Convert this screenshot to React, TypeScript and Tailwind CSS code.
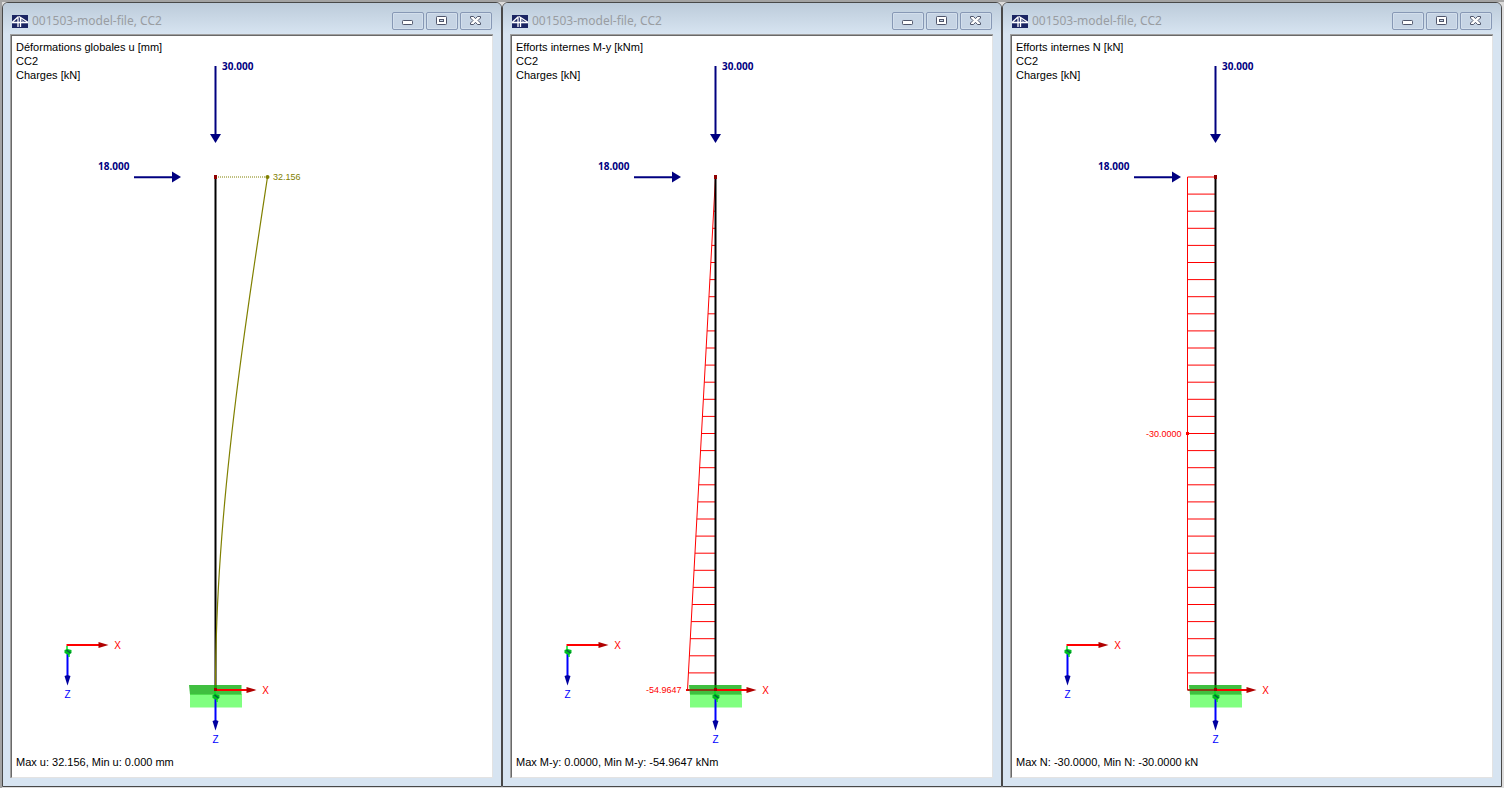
import React from 'react';

interface ResultView {
  title: string;
  result: string;
  summary: string;
  kind: 'deformation' | 'moment' | 'normal';
}

const views: ResultView[] = [
  { title: '001503-model-file, CC2', result: 'Déformations globales u [mm]', summary: 'Max u: 32.156, Min u: 0.000 mm', kind: 'deformation' },
  { title: '001503-model-file, CC2', result: 'Efforts internes M-y [kNm]', summary: 'Max M-y: 0.0000, Min M-y: -54.9647 kNm', kind: 'moment' },
  { title: '001503-model-file, CC2', result: 'Efforts internes N [kN]', summary: 'Max N: -30.0000, Min N: -30.0000 kN', kind: 'normal' },
];

// Column geometry in drawing units
const TOP = 177;
const BASE = 690;
const AXIS = 215.5;
const DIVISIONS = 30;
const steps = Array.from({ length: DIVISIONS + 1 }, (_, i) => i);
const stepY = (i: number) => TOP + ((BASE - TOP) * i) / DIVISIONS;

// Bending line of a cantilever loaded at its free end
const bendingLine = steps
  .map(i => {
    const s = 1 - i / DIVISIONS;
    return `${AXIS + (52 * (3 * s * s - s * s * s)) / 2},${stepY(i)}`;
  })
  .join(' ');

const AppIcon: React.FC = () => (
  <svg viewBox="0 0 16 13" className="h-[13px] w-4 flex-shrink-0" aria-hidden="true">
    <rect width="16" height="13" fill="#1b2563" />
    <path d="M0 7.5h16" stroke="#fff" strokeWidth="1.6" />
    <path d="M0.5 7L6.5 1.5M6 1.5V12M8.5 2v10M7 1.5l8.500 5.500" stroke="#fff" strokeWidth="1.3" fill="none" />
    <path d="M8.500 4l3 3" stroke="#fff" strokeWidth="0.8" />
  </svg>
);

const MinimizeIcon = () => (
  <svg viewBox="0 0 12 10" className="h-[10px] w-3" aria-hidden="true">
    <rect x="0.5" y="4.5" width="10" height="4" rx="0.8" fill="#fff" stroke="#50566b" />
  </svg>
);

const MaximizeIcon = () => (
  <svg viewBox="0 0 12 10" className="h-[10px] w-3" aria-hidden="true">
    <rect x="0.5" y="0.5" width="10" height="8" rx="0.8" fill="#fff" stroke="#50566b" />
    <rect x="3.5" y="3.5" width="4" height="2" fill="#c7d5e6" stroke="#50566b" />
  </svg>
);

const CloseIcon = () => (
  <svg viewBox="0 0 12 10" className="h-[10px] w-3" aria-hidden="true">
    <path d="M0.5 0.5h3l2 2.2 2-2.2h3V2L8 4.5 10.5 7v1.5h-3l-2-2.2-2 2.2h-3V7L3 4.5 0.5 2z" fill="#fff" stroke="#50566b" />
  </svg>
);

const WindowButton: React.FC<{ label: string; children: React.ReactNode }> = ({ label, children }) => (
  <button
    aria-label={label}
    className="flex h-[18px] w-8 items-center justify-center rounded-[2px] border border-[#8798b5] bg-[#c6d4e4] shadow-[inset_0_0_0_1px_#d3dfec]"
  >
    {children}
  </button>
);

// X / Z axes, with the Y axis pointing away from the viewer
const Axes: React.FC<{ x: number; y: number }> = ({ x, y }) => (
  <g>
    <path d={`M${x} ${y + 5}v28`} stroke="#0000ff" strokeWidth="2" />
    <path d={`M${x - 3} ${y + 31}l3-1 3 1-3 9.5z`} fill="#0000a0" />
    <path d={`M${x - 1} ${y}h34`} stroke="#ff0000" strokeWidth="2" />
    <path d={`M${x + 31} ${y - 3}l10 3-10 3z`} fill="#b00000" />
    <path d={`M${x - 0.5} ${y + 1}v7M${x + 1.5} ${y + 5}v7`} stroke="#00e020" strokeWidth="1.5" />
    <path d={`M${x - 3} ${y + 5}l3-1 4 1v3l-3 2-4-2z`} fill="#00c020" />
    <path d={`M${x - 1} ${y + 5}l4 3`} stroke="#006040" strokeWidth="1.5" />
    <text x={x + 50} y={y + 4} textAnchor="middle" fontSize="10" fill="#ff0000">X</text>
    <text x={x} y={y + 53} textAnchor="middle" fontSize="10" fill="#0000ff">Z</text>
  </g>
);

const Loads: React.FC = () => (
  <g fill="#000080" fontWeight="bold" fontSize="10" fontFamily="'Noto Sans', sans-serif">
    <path d="M215.5 66v70" stroke="#000080" strokeWidth="2" />
    <path d="M210 134h11l-5.5 9z" />
    <text x="222" y="70">30.000</text>
    <path d="M134 177.3h40" stroke="#000080" strokeWidth="2" />
    <path d="M172 171.5v11l9-5.5z" />
    <text x="98" y="170">18.000</text>
  </g>
);

const Deformation: React.FC = () => (
  <g>
    <polyline points={bendingLine} fill="none" stroke="#808000" strokeWidth="1.2" />
    <path d="M218 177h49" stroke="#808000" strokeDasharray="1 1" />
    <circle cx="267.5" cy="177" r="2" fill="#808000" />
    <text x="273" y="180" fontSize="9" fill="#808000">32.156</text>
  </g>
);

const Moment: React.FC = () => (
  <g stroke="#ff0000">
    {steps.map(i => (
      <path key={i} d={`M${AXIS - (28 * i) / DIVISIONS} ${stepY(i)}H${AXIS}`} />
    ))}
    <path d={`M${AXIS} ${TOP}L${AXIS - 28} ${BASE}`} />
    <rect x="186" y="689" width="3" height="2" fill="#ff0000" stroke="none" />
    <text x="146" y="693" fontSize="9" fill="#ff0000" stroke="none">-54.9647</text>
  </g>
);

const NormalForce: React.FC = () => (
  <g stroke="#ff0000">
    {steps.map(i => (
      <path key={i} d={`M${AXIS - 28} ${stepY(i)}H${AXIS}`} />
    ))}
    <path d={`M${AXIS - 28} ${TOP}V${BASE}`} />
    <rect x="186" y="432" width="3" height="3" fill="#ff0000" stroke="none" />
    <text x="146" y="437" fontSize="9" fill="#ff0000" stroke="none">-30.0000</text>
  </g>
);

const ModelDrawing: React.FC<{ kind: ResultView['kind'] }> = ({ kind }) => (
  <svg
    viewBox="12 36 480 741"
    fontFamily="'Liberation Sans', Arial, sans-serif"
    className="col-start-1 row-start-1 h-full min-h-0 w-full"
    role="img"
    aria-label="Column model"
  >
    {kind === 'moment' && <Moment />}
    {kind === 'normal' && <NormalForce />}
    <path d={`M${AXIS} ${TOP}V${BASE}`} stroke="#000" strokeWidth="2" />
    {kind === 'deformation' && <Deformation />}
    <rect x="214" y="175" width="3" height="4" fill="#900000" />
    <Loads />

    {/* Support */}
    <path d="M190 694h52v13.5h-52z" fill="#80ff80" />
    <path d="M189 685h52.5v9.5H190z" fill="#00aa00" fillOpacity="0.75" />
    {kind !== 'deformation' && <path d={`M${AXIS - 28} ${BASE}H${AXIS}`} stroke="#a02010" strokeWidth="1.5" />}
    <Axes x={215.5} y={690} />
    <rect x="214" y="688" width="3" height="3" fill="#a00000" />

    <Axes x={67.5} y={645} />
  </svg>
);

const ResultWindow: React.FC<{ view: ResultView }> = ({ view }) => (
  <section className="flex min-w-0 flex-1 flex-col rounded-t-[6px] border border-[#484848] bg-[#d7e4f1] pr-2 pb-2 pl-[7px]">
    <header className="-mr-2 -ml-[7px] flex h-[31px] flex-shrink-0 items-center justify-between rounded-t-[5px] bg-linear-to-b from-[#bccbda] to-[#d7e4f1] px-[9px] pt-[9px] pb-1">
      <div className="flex min-w-0 items-center gap-1">
        <AppIcon />
        <h2 className="truncate font-['Noto_Sans',sans-serif] text-xs leading-4 text-[#999da2]">{view.title}</h2>
      </div>
      <div className="flex gap-[2px]">
        <WindowButton label="Réduire"><MinimizeIcon /></WindowButton>
        <WindowButton label="Agrandir"><MaximizeIcon /></WindowButton>
        <WindowButton label="Fermer"><CloseIcon /></WindowButton>
      </div>
    </header>

    <div className="flex min-h-0 flex-1 border-t border-l border-[#a0a0a0]">
      <div className="grid min-w-0 flex-1 grid-rows-[minmax(0,1fr)] border border-t-[#696969] border-r-[#e3e3e3] border-b-[#e3e3e3] border-l-[#696969] bg-white">
        <ModelDrawing kind={view.kind} />
        <div className="col-start-1 row-start-1 flex flex-col justify-between px-1 pt-1 pb-2 text-[11px] leading-[14px] text-black">
          <div>
            <p>{view.result}</p>
            <p>CC2</p>
            <p>Charges [kN]</p>
          </div>
          <p>{view.summary}</p>
        </div>
      </div>
    </div>
  </section>
);

export default function App() {
  return (
    <main className="flex h-screen border-t-2 border-l-2 border-[#a3a3a3] bg-[#dcdcdc] pr-[2px] pb-px font-['Liberation_Sans',Arial,sans-serif]">
      {views.map(view => (
        <ResultWindow key={view.kind} view={view} />
      ))}
    </main>
  );
}
